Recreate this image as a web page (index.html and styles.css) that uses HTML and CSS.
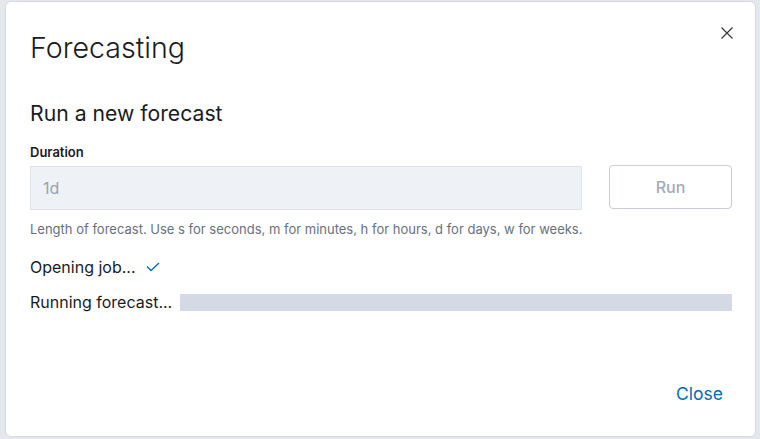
FILE: index.html
```html
<!DOCTYPE html>
<html>
<head>
<meta charset="utf-8">
<link rel="stylesheet" href="styles.css">
</head>
<body>
<div class="modal">
  <button class="close-x" aria-label="Close">
    <svg width="12" height="12" viewBox="0 0 12 12"><path d="M0.5 0.5 L11.5 11.5 M11.5 0.5 L0.5 11.5" stroke="#343741" stroke-width="1.2" fill="none"/></svg>
  </button>
  <div class="header">
    <h1 class="title">Forecasting</h1>
  </div>
  <div class="body">
    <h2 class="subtitle">Run a new forecast</h2>
    <div class="form-row">
      <div class="field">
        <label class="label">Duration</label>
        <div class="input">1d</div>
        <div class="help">Length of forecast. Use s for seconds, m for minutes, h for hours, d for days, w for weeks.</div>
      </div>
      <button class="run-btn">Run</button>
    </div>
    <div class="status first">
      <span>Opening job...</span>
      <svg class="check" width="14" height="10" viewBox="0 0 14 10"><path d="M1 4.5 L5 8.5 L13 1" stroke="#006bb4" stroke-width="1.3" fill="none"/></svg>
    </div>
    <div class="status">
      <span>Running forecast...</span>
      <div class="progress"></div>
    </div>
  </div>
  <div class="footer">
    <button class="link-btn">Close</button>
  </div>
</div>
</body>
</html>
```
FILE: styles.css
```css
* { box-sizing: border-box; }
html, body { margin: 0; height: 100%; }
body {
  background: #e4e7ec;
  padding: 1px 4px 2px 5px;
  font-family: Inter, "Noto Sans", sans-serif;
  color: #1a1c21;
}
.modal {
  position: relative;
  background: #fff;
  border: 1px solid #d3dae6;
  border-radius: 6px;
  height: 100%;
  display: flex;
  flex-direction: column;
}
.close-x {
  position: absolute;
  top: 25px;
  right: 22px;
  background: none;
  border: 0;
  padding: 0;
  width: 12px;
  height: 12px;
  display: flex;
}
.header { padding: 26px 23px 0 24px; }
.title {
  margin: 0;
  font-size: 28.6px;
  font-weight: 300;
  line-height: 40px;
}
.body { padding: 31px 23px 0 24px; flex: 1; }
.subtitle {
  margin: 0 0 17px 0;
  font-size: 21.2px;
  font-weight: 400;
  line-height: 28px;
}
.form-row { display: flex; gap: 27px; align-items: flex-start; }
.field { flex: 1; min-width: 0; }
.label {
  display: block;
  font-size: 13px;
  font-weight: 600;
  line-height: 16px;
  margin-bottom: 6px;
}
.input {
  height: 44px;
  background: #eef1f6;
  border: 1px solid #dfe3ea;
  padding: 0 12px;
  display: flex;
  align-items: center;
  font-size: 16px;
  color: #98a2b3;
}
.help {
  margin-top: 10px;
  font-size: 13px;
  line-height: 18px;
  color: #69707d;
  white-space: nowrap;
}
.run-btn {
  margin-top: 21px;
  width: 123px;
  height: 44px;
  background: #fff;
  border: 1px solid #c9ced6;
  border-radius: 4px;
  font-family: inherit;
  font-size: 16px;
  font-weight: 500;
  color: #a2abba;
}
.status {
  display: flex;
  align-items: center;
  gap: 8px;
  font-size: 16px;
  line-height: 20px;
  margin-top: 15px;
}
.status.first { margin-top: 19px; gap: 10px; }
.progress {
  flex: 1;
  height: 17px;
  background: #d3dae6;
}
.footer {
  display: flex;
  justify-content: flex-end;
  padding: 0 24px 24px 24px;
}
.link-btn {
  background: none;
  border: 0;
  font-family: inherit;
  font-size: 17.5px;
  color: #006bb4;
  padding: 8px 8px 8px 10px;
}
```
